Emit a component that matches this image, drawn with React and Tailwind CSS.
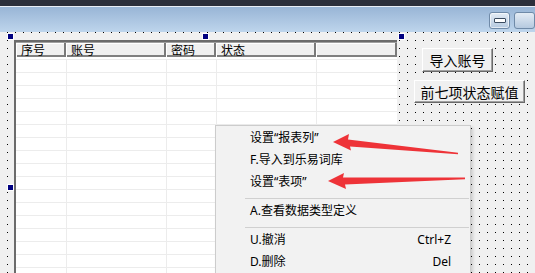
import React from "react";

const columns = [
  { title: "序号", w: "w-[50px]" },
  { title: "账号", w: "w-[100px]" },
  { title: "密码", w: "w-[50px]" },
  { title: "状态", w: "w-[100px]" },
  { title: "", w: "flex-1" },
];

const rows = Array.from({ length: 17 }, (_, i) => i);

function Handle({ className }) {
  return (
    <div className={`absolute h-[5px] w-[5px] bg-[#000080] outline outline-1 outline-white ${className}`} />
  );
}

function ClassicButton({ children, className }) {
  return (
    <div
      className={`flex items-center justify-center border border-t-white border-l-white border-r-[#696969] border-b-[#696969] bg-[#f0f0f0] text-[14px] leading-none text-black shadow-[inset_-1px_-1px_0_#a0a0a0] ${className}`}
    >
      {children}
    </div>
  );
}

function MenuItem({ label, shortcut }) {
  return (
    <div className="flex h-[22px] items-center pl-[34px] pr-[19px] text-[12px] text-black">
      <span className="flex-1">{label}</span>
      {shortcut && <span>{shortcut}</span>}
    </div>
  );
}

function Separator() {
  return (
    <div className="h-[7px] pl-[29px] pr-[1px] pt-[5px]">
      <div className="h-px bg-[#d0d0d0]" />
    </div>
  );
}

export default function App() {
  return (
    <div className="relative h-[273px] w-[535px] overflow-hidden bg-[#f0f0f0] font-['Noto_Sans_CJK_SC','Noto_Sans',sans-serif]">
      {/* title bar */}
      <div className="h-[6px] bg-[#2b2f3b]" />
      <div className="h-px bg-[#e8eef6]" />
      <div className="flex h-[25px] items-start bg-gradient-to-b from-[#98b5d6] to-[#bed5ec] pt-[5px] pl-[489px]">
        <div className="flex h-[17px] w-[30px] items-center justify-center rounded-[3px] border border-[#6f8aa8] bg-gradient-to-b from-[#e4ecf5] to-[#b5c9df] shadow-[inset_0_0_0_1px_rgba(255,255,255,0.6)]">
          <div className="h-[5px] w-[12px] rounded-[1px] border border-[#3b4c61] bg-white" />
        </div>
        <div className="ml-[4px] h-[17px] w-[30px] rounded-[3px] border border-[#6f8aa8] bg-gradient-to-b from-[#e4ecf5] to-[#b5c9df]" />
      </div>

      {/* form canvas */}
      <div className="relative flex h-[241px] items-start bg-[linear-gradient(to_right,transparent_1px,#f0f0f0_1px),linear-gradient(to_bottom,transparent_1px,#f0f0f0_1px),linear-gradient(#000,#000)] bg-[length:8px_8px,8px_8px,100%_100%] bg-[position:7px_0px,7px_0px,0_0]">
        {/* list view */}
        <div className="ml-[14px] mt-[8px] w-[383px] self-stretch border-l-2 border-t-2 border-[#6b6b6b] bg-white">
          <div className="flex h-[15px] border-t border-[#a0a0a0] bg-[#f0f0f0] shadow-[inset_0_-2px_0_#808080]">
            {columns.map((c, i) => (
              <div
                key={i}
                className={`${c.w} h-full border-r-2 border-r-[#7a7a7a] pl-[5px] text-[12px] leading-[13px] text-black shadow-[inset_1px_1px_0_#fff]`}
              >
                {c.title}
              </div>
            ))}
          </div>
          <div className="pt-[2px]">
            {rows.map((r) => (
              <div key={r} className="flex h-[13px] border-t border-[#ececec]">
                {columns.map((c, i) => (
                  <div key={i} className={`${c.w} ${i > 0 ? "border-l border-[#ececec]" : ""}`} />
                ))}
              </div>
            ))}
          </div>
        </div>

        {/* buttons */}
        <div className="flex flex-col items-start">
          <ClassicButton className="ml-[25px] mt-[16px] h-[24px] w-[71px]">导入账号</ClassicButton>
          <ClassicButton className="ml-[17px] mt-[8px] h-[23px] w-[111px]">前七项状态赋值</ClassicButton>
        </div>

        {/* selection handles */}
        <Handle className="left-[8px] top-[2px]" />
        <Handle className="left-[203px] top-[2px]" />
        <Handle className="left-[399px] top-[2px]" />
        <Handle className="left-[8px] top-[153px]" />
      </div>

      {/* context menu */}
      <div className="absolute left-[215px] top-[125px] w-[256px] border border-[#cccccc] bg-[#f2f2f2] pt-[1px] font-['Noto_Sans','Noto_Sans_CJK_SC',sans-serif] shadow-[2px_2px_3px_rgba(0,0,0,0.15)]">
        <MenuItem label="设置“报表列”" />
        <MenuItem label="F.导入到乐易词库" />
        <MenuItem label="设置“表项”" />
        <Separator />
        <MenuItem label="A.查看数据类型定义" />
        <Separator />
        <MenuItem label="U.撤消" shortcut="Ctrl+Z" />
        <MenuItem label="D.删除" shortcut="Del" />
      </div>

      {/* annotation arrows */}
      <svg className="pointer-events-none absolute left-0 top-0" width="535" height="273" viewBox="0 0 535 273">
        <polygon
          points="333,142 349,134 348,139.5 458,152.8 458,154.3 350,146.5 351,150.5"
          fill="#ee3338"
        />
        <polygon
          points="328,181 344,173 343,177.5 465,177.6 465,179.2 345,184.5 346,189"
          fill="#ee3338"
        />
      </svg>
    </div>
  );
}
